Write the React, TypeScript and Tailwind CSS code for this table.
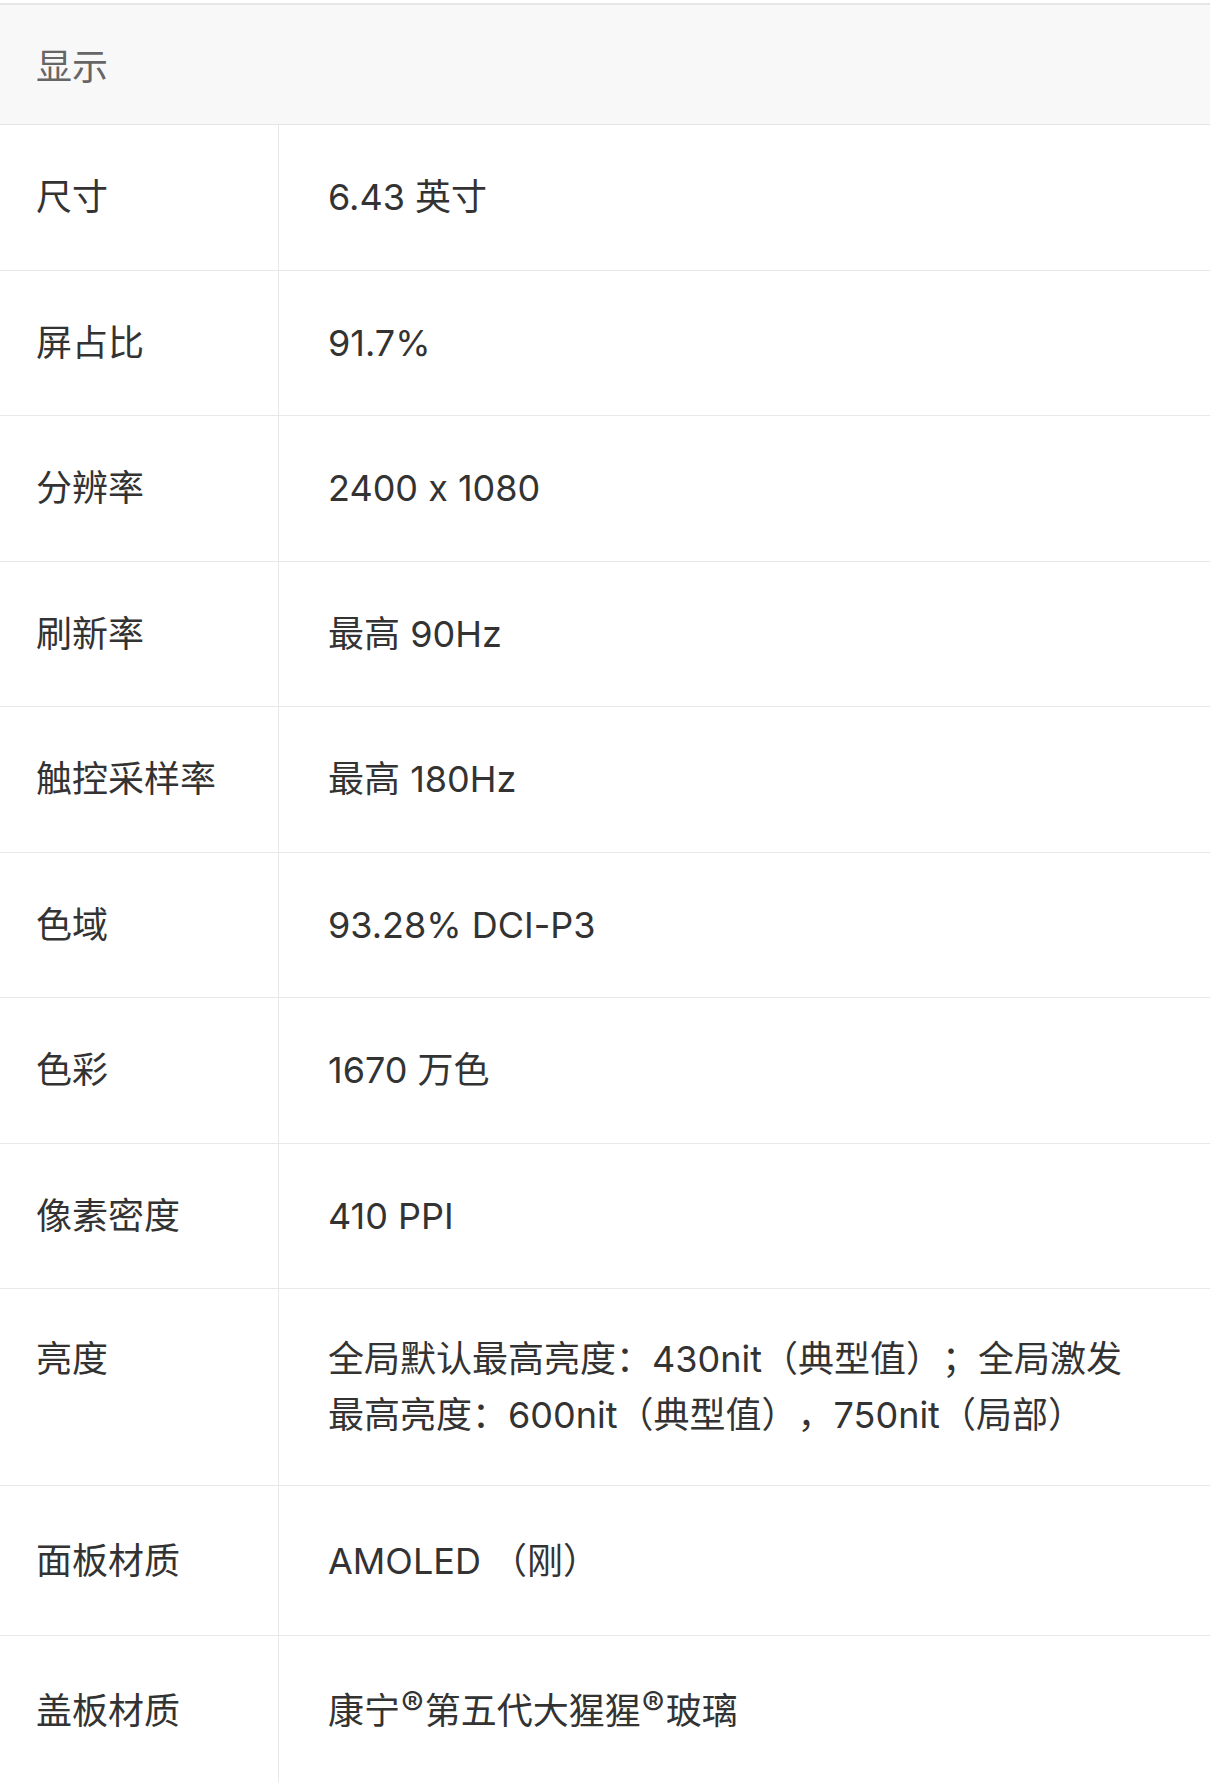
import React from "react";

type Spec = { label: string; value: React.ReactNode; tall?: boolean; h?: string };

const Reg = () => (
  <span className="inline-block align-top text-[34px] leading-none mt-[3px] mx-[1px]" style={{ fontFamily: "Inter, sans-serif" }}>
    ®
  </span>
);

const specs: Spec[] = [
  { label: "尺寸", value: "6.43 英寸" },
  { label: "屏占比", value: "91.7%" },
  { label: "分辨率", value: "2400 x 1080" },
  { label: "刷新率", value: "最高 90Hz" },
  { label: "触控采样率", value: "最高 180Hz" },
  { label: "色域", value: "93.28% DCI-P3" },
  { label: "色彩", value: "1670 万色" },
  { label: "像素密度", value: "410 PPI" },
  {
    label: "亮度",
    tall: true,
    value: (
      <>
        全局默认最高亮度：430nit（典型值）；全局激发
        <br />
        最高亮度：600nit（典型值），750nit（局部）
      </>
    ),
  },
  { label: "面板材质", value: "AMOLED （刚）", h: "h-[149px]" },
  {
    label: "盖板材质",
    value: (
      <>
        康宁<Reg />第五代大猩猩<Reg />玻璃
      </>
    ),
    h: "h-[149px]",
  },
];

export default function App() {
  return (
    <div
      className="w-[1210px] min-h-[1782px] bg-white pt-[3px] text-[36px] text-[#333333] [font-feature-settings:'calt'_0] [text-spacing-trim:space-all]"
      style={{ fontFamily: 'Inter, "Noto Sans CJK SC", sans-serif' }}
    >
      <div className="h-[122px] border-t-2 border-b border-[#e6e6e6] bg-[#f8f8f8] flex items-center pl-[36px] pt-[4px] text-[#666666]">
        显示
      </div>
      {specs.map((s) => (
        <div key={s.label} className="flex border-b border-[#e8e8e8]">
          <div
            className={
              s.tall
                ? "w-[279px] shrink-0 border-r border-[#e8e8e8] pl-[36px] py-[42px] leading-[56px]"
                : `w-[279px] shrink-0 border-r border-[#e8e8e8] pl-[36px] flex items-center ${s.h ?? "h-[144.5px]"}`
            }
          >
            {s.label}
          </div>
          <div
            className={
              s.tall
                ? "flex-1 pl-[49px] pr-[30px] py-[42px] leading-[56px]"
                : `flex-1 pl-[49px] pr-[30px] flex items-center ${s.h ?? "h-[144.5px]"}`
            }
          >
            <span>{s.value}</span>
          </div>
        </div>
      ))}
    </div>
  );
}
